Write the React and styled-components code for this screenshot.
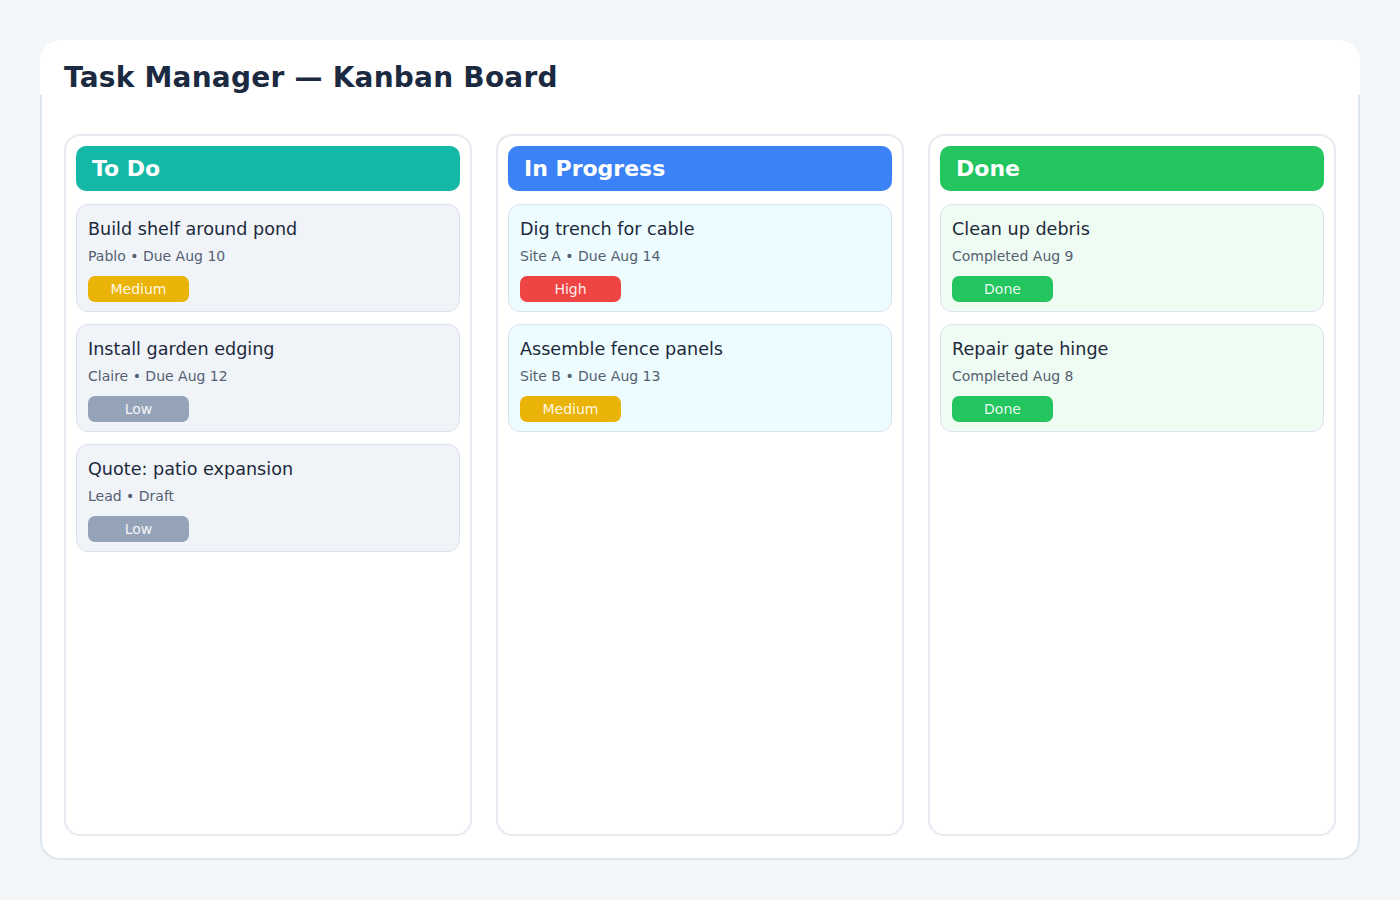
import React from "react";
import styled, { createGlobalStyle } from "styled-components";

const GlobalStyle = createGlobalStyle`
    html, body {
        margin: 0;
        padding: 0;
        background: #f4f7fa;
        font-family: "DejaVu Sans", "Liberation Sans", sans-serif;
    }
`;

const Page = styled.div`
    padding: 40px;
    box-sizing: border-box;
    height: 900px;
`;

const Panel = styled.div`
    height: 820px;
    box-sizing: border-box;
    background: #ffffff;
    border: 2px solid #dfe5ec;
    border-radius: 20px;
    display: flex;
    flex-direction: column;
`;

const Header = styled.div`
    margin: -2px -2px 0 -2px;
    height: 55px;
    box-sizing: border-box;
    padding: 21px 24px 0 24px;
    background: #ffffff;
    border-radius: 20px 20px 0 0;
`;

const Title = styled.h1`
    margin: 0;
    font-size: 28px;
    letter-spacing: 0.22px;
    font-weight: bold;
    color: #1b2a41;
    line-height: 33px;
`;

const Board = styled.div`
    flex: 1;
    min-height: 0;
    display: grid;
    grid-template-columns: repeat(3, 1fr);
    gap: 24px;
    padding: 39px 22px 22px 22px;
`;

const Column = styled.div`
    border: 2px solid #e6eaf0;
    border-radius: 16px;
    padding: 10px;
    display: flex;
    flex-direction: column;
    gap: 12px;
`;

const ColumnHeader = styled.div`
    height: 45px;
    box-sizing: border-box;
    padding: 0 16px;
    display: flex;
    align-items: center;
    border-radius: 10px;
    background: ${(p) => p.$color};
    color: #ffffff;
    font-size: 22px;
    font-weight: bold;
    margin-bottom: 1px;
`;

const Card = styled.div`
    border: 1px solid #dde3ea;
    border-radius: 12px;
    background: ${(p) => p.$bg};
    padding: 13px 11px 9px 11px;
`;

const CardTitle = styled.div`
    font-size: 17.6px;
    line-height: 22px;
    color: #1e293b;
    margin-bottom: 8px;
`;

const Meta = styled.div`
    font-size: 14px;
    line-height: 17px;
    color: #556070;
    margin-bottom: 11px;
`;

const Badge = styled.div`
    width: 101px;
    height: 26px;
    border-radius: 7px;
    background: ${(p) => p.$color};
    color: rgba(255, 255, 255, 0.92);
    font-size: 14px;
    display: flex;
    align-items: center;
    justify-content: center;
`;

const badgeColors = {
    Medium: "#eab308",
    High: "#ef4444",
    Low: "#94a3b8",
    Done: "#22c55e",
};

const columns = [
    {
        name: "To Do",
        color: "#14b8a6",
        cardBg: "#f0f4f9",
        cards: [
            { title: "Build shelf around pond", meta: "Pablo • Due Aug 10", badge: "Medium" },
            { title: "Install garden edging", meta: "Claire • Due Aug 12", badge: "Low" },
            { title: "Quote: patio expansion", meta: "Lead • Draft", badge: "Low" },
        ],
    },
    {
        name: "In Progress",
        color: "#3b82f6",
        cardBg: "#ecfcff",
        cards: [
            { title: "Dig trench for cable", meta: "Site A • Due Aug 14", badge: "High" },
            { title: "Assemble fence panels", meta: "Site B • Due Aug 13", badge: "Medium" },
        ],
    },
    {
        name: "Done",
        color: "#22c55e",
        cardBg: "#effcf3",
        cards: [
            { title: "Clean up debris", meta: "Completed Aug 9", badge: "Done" },
            { title: "Repair gate hinge", meta: "Completed Aug 8", badge: "Done" },
        ],
    },
];

export default function App() {
    return (
        <>
            <GlobalStyle />
            <Page>
                <Panel>
                    <Header>
                        <Title>Task Manager — Kanban Board</Title>
                    </Header>
                    <Board>
                        {columns.map((col) => (
                            <Column key={col.name}>
                                <ColumnHeader $color={col.color}>{col.name}</ColumnHeader>
                                {col.cards.map((card) => (
                                    <Card key={card.title} $bg={col.cardBg}>
                                        <CardTitle>{card.title}</CardTitle>
                                        <Meta>{card.meta}</Meta>
                                        <Badge $color={badgeColors[card.badge]}>{card.badge}</Badge>
                                    </Card>
                                ))}
                            </Column>
                        ))}
                    </Board>
                </Panel>
            </Page>
        </>
    );
}
